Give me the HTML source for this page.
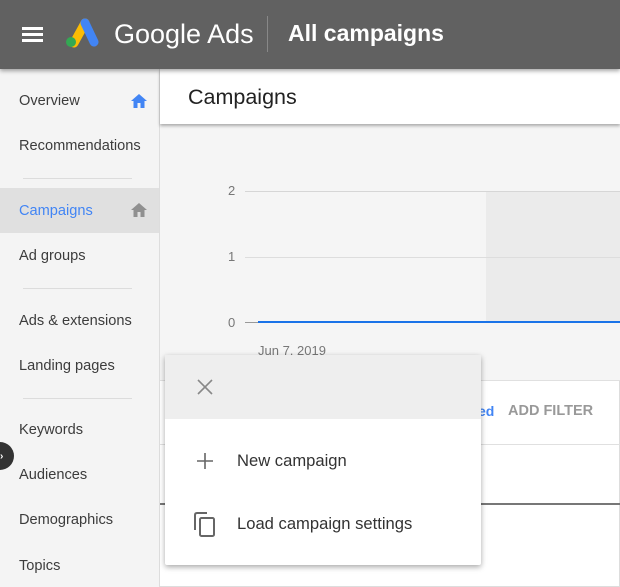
<!DOCTYPE html>
<html><head><style>
*{margin:0;padding:0;box-sizing:border-box}
body{width:620px;height:587px;overflow:hidden;font-family:"Liberation Sans",Arial,sans-serif;background:#fff;position:relative}
.abs{position:absolute}
.hdr{left:0;top:0;width:620px;height:69px;background:#616161;box-shadow:0 2px 4px rgba(0,0,0,.35);z-index:3}
.side{left:0;top:69px;width:160px;height:518px;background:#f4f4f4;border-right:1px solid #ddd}
.nav{position:absolute;left:19px;font-size:14.6px;color:#3c3c3c}
.sep{position:absolute;left:23px;width:109px;height:1px;background:#dcdcdc}
.main{left:160px;top:69px;width:460px;height:518px;background:#fff;border-right:1px solid #ddd;border-bottom:1px solid #ddd}
</style></head><body>
<div class="abs hdr">
  <div class="abs" style="left:22px;top:27px;width:21px;height:3px;background:#fff"></div>
  <div class="abs" style="left:22px;top:33px;width:21px;height:3px;background:#fff"></div>
  <div class="abs" style="left:22px;top:39px;width:21px;height:3px;background:#fff"></div>
  <svg class="abs" style="left:63px;top:17px" width="36" height="32" viewBox="0 0 36 32">
    <line x1="11" y1="26" x2="22" y2="6" stroke="#fbbc04" stroke-width="9" stroke-linecap="round"/>
    <line x1="22" y1="6" x2="31" y2="25" stroke="#4285f4" stroke-width="9" stroke-linecap="round"/>
    <circle cx="8" cy="25" r="5" fill="#34a853"/>
  </svg>
  <div class="abs" style="left:114px;top:19px;font-size:27px;color:#fff">Google Ads</div>
  <div class="abs" style="left:267px;top:16px;width:1px;height:36px;background:#888"></div>
  <div class="abs" style="left:288px;top:20px;font-size:23px;font-weight:bold;color:#fff">All campaigns</div>
</div>
<div class="abs side">
  <div class="nav" style="top:24px">Overview</div>
  <svg class="abs" style="left:130px;top:24px" width="18" height="16" viewBox="0 0 18 16"><path d="M9 1L1 8h2.5v7h4v-5h3v5h4V8H17z" fill="#4285f4"/></svg>
  <div class="nav" style="top:69px">Recommendations</div>
  <div class="sep" style="top:109px"></div>
  <div class="abs" style="left:0;top:119px;width:159px;height:45px;background:#e0e0e0"></div>
  <div class="nav" style="top:134px;color:#4285f4">Campaigns</div>
  <svg class="abs" style="left:130px;top:133px" width="18" height="16" viewBox="0 0 18 16"><path d="M9 1L1 8h2.5v7h4v-5h3v5h4V8H17z" fill="#909090"/></svg>
  <div class="nav" style="top:179px">Ad groups</div>
  <div class="sep" style="top:219px"></div>
  <div class="nav" style="top:244px">Ads &amp; extensions</div>
  <div class="nav" style="top:289px">Landing pages</div>
  <div class="sep" style="top:329px"></div>
  <div class="nav" style="top:353px">Keywords</div>
  <div class="nav" style="top:398px">Audiences</div>
  <div class="nav" style="top:443px">Demographics</div>
  <div class="nav" style="top:489px">Topics</div>
</div>
<div class="abs" style="left:-14px;top:442px;width:28px;height:28px;border-radius:50%;background:#333;z-index:2"></div>
<div class="abs" style="left:0;top:451px;color:#fff;font-size:10px;z-index:2;font-weight:bold">›</div>
<div class="abs main">
  <div class="abs" style="left:0;top:0;width:460px;height:55px;background:#fff;box-shadow:0 2px 3px rgba(0,0,0,.3);z-index:1"></div>
  <div class="abs" style="left:28px;top:16px;font-size:21.5px;color:#222;z-index:2">Campaigns</div>
  <div class="abs" style="left:0;top:55px;width:460px;height:256px;background:#f5f5f5"></div>
  <div class="abs" style="left:326px;top:123px;width:134px;height:131px;background:#ebebeb"></div>
  <div class="abs" style="left:85px;top:122px;width:375px;height:1px;background:#d6d6d6"></div>
  <div class="abs" style="left:85px;top:188px;width:375px;height:1px;background:#ddd"></div>
  <div class="abs" style="left:85px;top:253px;width:14px;height:1px;background:#999"></div>
  <div class="abs" style="left:98px;top:252px;width:362px;height:2px;background:#1a73e8"></div>
  <div class="abs" style="left:68px;top:114px;font-size:13px;color:#777">2</div>
  <div class="abs" style="left:68px;top:180px;font-size:13px;color:#777">1</div>
  <div class="abs" style="left:68px;top:246px;font-size:13px;color:#777">0</div>
  <div class="abs" style="left:98px;top:274px;font-size:13px;color:#777">Jun 7, 2019</div>
  <div class="abs" style="left:0;top:311px;width:460px;height:1px;background:#e0e0e0"></div>
  <div class="abs" style="left:318px;top:334px;font-size:14px;font-weight:bold;color:#4285f4">ed</div>
  <div class="abs" style="left:348px;top:334px;font-size:14.5px;font-weight:bold;color:#999">ADD FILTER</div>
  <div class="abs" style="left:0;top:375px;width:460px;height:1px;background:#e0e0e0"></div>
  <div class="abs" style="left:0;top:434px;width:460px;height:2px;background:#777"></div>
</div>
<div class="abs" style="left:165px;top:355px;width:316px;height:210px;background:#fff;box-shadow:0 2px 6px rgba(0,0,0,.35);border-radius:2px;z-index:4">
  <div class="abs" style="left:0;top:0;width:316px;height:64px;background:#eee"></div>
  <svg class="abs" style="left:32px;top:24px" width="16" height="16" viewBox="0 0 16 16"><path d="M1 1L15 15M15 1L1 15" stroke="#888" stroke-width="1.6"/></svg>
  <svg class="abs" style="left:32px;top:98px" width="16" height="16" viewBox="0 0 16 16"><path d="M8 0V16M0 8H16" stroke="#666" stroke-width="1.6"/></svg>
  <div class="abs" style="left:72px;top:96px;font-size:16.6px;color:#333">New campaign</div>
  <svg class="abs" style="left:28px;top:157px" width="24" height="26" viewBox="0 0 24 26"><path d="M14 1H4Q2 1 2 3V18" stroke="#666" stroke-width="2" fill="none"/><rect x="7" y="6" width="14" height="18" rx="1.5" stroke="#666" stroke-width="2" fill="none"/></svg>
  <div class="abs" style="left:72px;top:159px;font-size:16.6px;color:#333">Load campaign settings</div>
</div>
</body></html>
